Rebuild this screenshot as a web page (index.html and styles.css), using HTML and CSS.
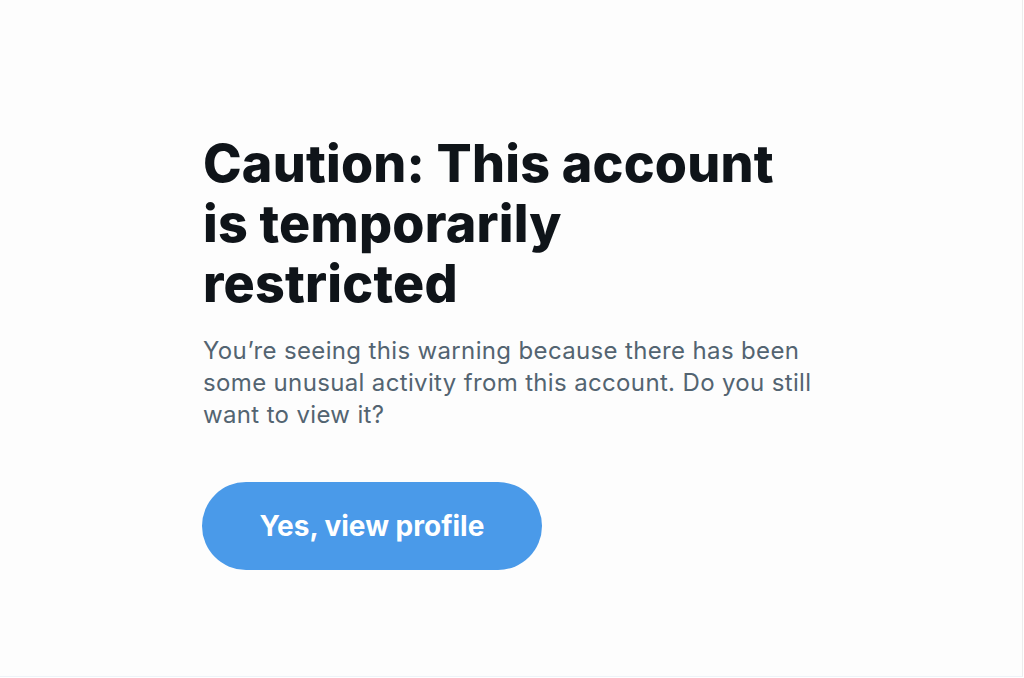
FILE: index.html
```html
<!DOCTYPE html>
<html lang="en">
<head>
<meta charset="utf-8">
<title>Caution</title>
<link rel="stylesheet" href="styles.css">
</head>
<body>
<div class="page">
  <main class="notice">
    <h1 class="notice-title">Caution: This account is temporarily restricted</h1>
    <p class="notice-text">You’re seeing this warning because there has been some unusual activity from this account. Do you still want to view it?</p>
    <button class="notice-button" type="button">Yes, view profile</button>
  </main>
</div>
</body>
</html>
```

FILE: styles.css
```css
html, body {
  margin: 0;
  padding: 0;
  background: #ffffff;
}

body {
  font-family: Inter, "Noto Sans", "Liberation Sans", sans-serif;
  width: 1024px;
  height: 678px;
  overflow: hidden;
}

.page {
  width: 1022px;
  height: 676px;
  background: #fdfdfd;
  border-right: 1px solid #ececec;
  border-bottom: 1px solid #eef3f8;
  box-sizing: content-box;
}

.notice {
  width: 624px;
  padding: 134px 0 0 203px;
  display: flex;
  flex-direction: column;
  align-items: flex-start;
}

.notice-title {
  max-width: 590px;
  margin: 0;
  font-size: 52px;
  line-height: 60px;
  font-weight: 800;
  color: #0f1419;
  letter-spacing: 0.2px;
}

.notice-text {
  margin: 21px 0 0;
  font-size: 24px;
  line-height: 32px;
  font-weight: 400;
  color: #536471;
  letter-spacing: 0.35px;
}

.notice-button {
  margin: 51px 0 0 -1px;
  width: 340px;
  height: 88px;
  border: none;
  border-radius: 44px;
  background: #4a9ae9;
  color: #ffffff;
  font-family: inherit;
  font-size: 28px;
  font-weight: 700;
  cursor: pointer;
}
```
